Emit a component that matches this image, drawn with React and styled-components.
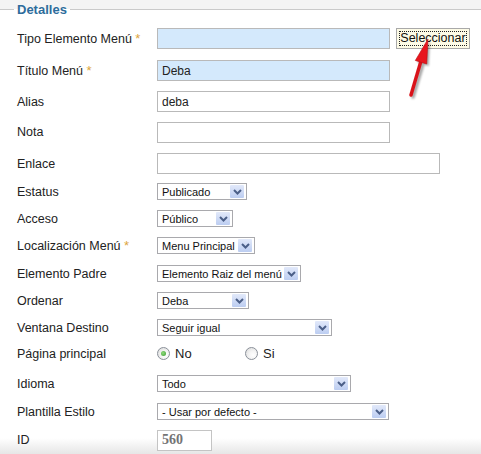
import React from "react";
import styled, { createGlobalStyle } from "styled-components";

const GlobalStyle = createGlobalStyle`
  body {
    margin: 0;
    font-family: "Liberation Sans", Arial, sans-serif;
    color: #222;
  }
`;

const Page = styled.div`
  position: relative;
  width: 481px;
  height: 454px;
  overflow: hidden;
  background: linear-gradient(
    to bottom,
    #f4f4f4 0,
    #f4f4f4 9px,
    #fff 9px,
    #fff 438px,
    #e6e6e6 454px
  );
`;

const Legend = styled.div`
  display: flex;
  align-items: center;
  height: 18px;
  margin-bottom: 4px;
  font-size: 13px;
  font-weight: bold;
  color: #2d6c9c;

  &::before,
  &::after {
    content: "";
    height: 1px;
    background: #cacaca;
  }
  &::before {
    width: 14px;
  }
  &::after {
    flex: 1;
  }

  span {
    padding: 0 3px;
  }
`;

const Row = styled.div`
  display: flex;
  align-items: center;
  height: ${({ $h }) => $h}px;
`;

const Label = styled.div`
  width: 157px;
  box-sizing: border-box;
  padding-left: 17px;
  font-size: 12.5px;
  white-space: nowrap;
`;

const Star = styled.span`
  color: #dca53c;
  font-size: 13px;
`;

const TextBox = styled.input`
  box-sizing: border-box;
  width: ${({ $w }) => $w}px;
  height: 21px;
  margin: 0;
  padding: 0 4px;
  border: 1px solid #b9b9b9;
  background: ${({ $fill }) => $fill || "#fff"};
  font-family: "Liberation Sans", Arial, sans-serif;
  font-size: 12px;
  color: #222;
  outline: none;
`;

const IdBox = styled(TextBox)`
  font-family: "Liberation Serif", "Times New Roman", serif;
  font-weight: bold;
  font-size: 14px;
  color: #747474;
  border-color: #c4c4c4;
`;

const Button = styled.button`
  box-sizing: border-box;
  width: 74px;
  height: 21px;
  margin: 0 0 0 6px;
  padding: 0;
  border: 1px solid #a9a9a9;
  background: #fdfbe6;
  font-family: "Liberation Sans", Arial, sans-serif;
  font-size: 12.5px;
  color: #111;
  position: relative;

  &::after {
    content: "";
    position: absolute;
    inset: 2px;
    border: 1px dotted #222;
  }
`;

const Select = styled.div`
  box-sizing: border-box;
  display: flex;
  align-items: center;
  width: ${({ $w }) => $w}px;
  height: 17px;
  padding: 0 2px 0 4px;
  border: 1px solid #a9a9ad;
  background: #fff;
  font-size: 11px;
  color: #111;

  span {
    flex: 1;
    white-space: nowrap;
  }
`;

const DropArrow = styled.div`
  flex: none;
  width: 14px;
  height: 13px;
  display: flex;
  align-items: center;
  justify-content: center;
  border-radius: 1px;
  background: linear-gradient(to bottom, #e2e9fa, #bccdf1);
`;

const Chevron = () => (
  <svg width="9" height="6" viewBox="0 0 9 6">
    <path d="M1 1 L4.5 4.5 L8 1" fill="none" stroke="#4b5f88" strokeWidth="2" />
  </svg>
);

const Dropdown = ({ w, children }) => (
  <Select $w={w}>
    <span>{children}</span>
    <DropArrow>
      <Chevron />
    </DropArrow>
  </Select>
);

const RadioGroup = styled.div`
  display: flex;
  align-items: center;
`;

const RadioItem = styled.label`
  display: flex;
  align-items: center;
  width: 88px;
  font-size: 13px;
  color: #222;
`;

const RadioDot = styled.span`
  box-sizing: border-box;
  width: 13px;
  height: 13px;
  margin-right: 5px;
  border-radius: 50%;
  border: 1px solid #8a9099;
  background: radial-gradient(circle at 65% 65%, #fff 0, #f4f4f4 40%, #d8d8d8 100%);
  display: flex;
  align-items: center;
  justify-content: center;

  &::after {
    content: "";
    width: 5px;
    height: 5px;
    border-radius: 50%;
    background: ${({ $on }) =>
      $on ? "radial-gradient(circle at 40% 40%, #8fdc7a, #3b9a35)" : "transparent"};
  }
`;

const Pointer = styled.svg`
  position: absolute;
  left: 400px;
  top: 30px;
`;

const RedArrow = () => (
  <Pointer width="45" height="75" viewBox="0 0 45 75">
    <defs>
      <filter id="sh" x="-50%" y="-50%" width="200%" height="200%">
        <feGaussianBlur stdDeviation="1.2" />
      </filter>
    </defs>
    <g transform="translate(2 2)" opacity="0.35" filter="url(#sh)">
      <line x1="21" y1="32" x2="11" y2="65" stroke="#000" strokeWidth="3.5" strokeLinecap="round" />
      <polygon points="28,9 26.7,34 15.3,30.5" fill="#000" />
    </g>
    <line x1="21" y1="31" x2="11" y2="65" stroke="#d9121a" strokeWidth="3.5" strokeLinecap="round" />
    <polygon points="28,9 26.7,34 15.3,30.5" fill="#e8161e" stroke="#b80d13" strokeWidth="0.6" />
  </Pointer>
);

const fields = [
  { label: "Título Menú", req: true, h: 33, el: <TextBox $w={233} $fill="#d4e9fc" defaultValue="Deba" /> },
  { label: "Alias", h: 29, el: <TextBox $w={233} defaultValue="deba" /> },
  { label: "Nota", h: 32, el: <TextBox $w={233} /> },
  { label: "Enlace", h: 31, el: <TextBox $w={283} /> },
  { label: "Estatus", h: 25, el: <Dropdown w={90}>Publicado</Dropdown> },
  { label: "Acceso", h: 29, el: <Dropdown w={76}>Público</Dropdown> },
  { label: "Localización Menú", req: true, h: 25, el: <Dropdown w={98}>Menu Principal</Dropdown> },
  { label: "Elemento Padre", h: 31, el: <Dropdown w={144}>Elemento Raiz del menú</Dropdown> },
  { label: "Ordenar", h: 23, el: <Dropdown w={92}>Deba</Dropdown> },
  { label: "Ventana Destino", h: 31, el: <Dropdown w={175}>Seguir igual</Dropdown> },
  {
    label: "Página principal",
    h: 21,
    el: (
      <RadioGroup>
        <RadioItem>
          <RadioDot $on />
          No
        </RadioItem>
        <RadioItem>
          <RadioDot />
          Si
        </RadioItem>
      </RadioGroup>
    ),
  },
  { label: "Idioma", h: 39, el: <Dropdown w={194}>Todo</Dropdown> },
  { label: "Plantilla Estilo", h: 17, el: <Dropdown w={232}>- Usar por defecto -</Dropdown> },
  { label: "ID", h: 40, el: <IdBox $w={55} defaultValue="560" readOnly /> },
];

const App = () => {
  return (
    <Page>
      <GlobalStyle />
      <Legend>
        <span>Detalles</span>
      </Legend>

      <Row $h={32}>
        <Label>
          Tipo Elemento Menú <Star>*</Star>
        </Label>
        <TextBox $w={233} $fill="#d4e9fc" />
        <Button>Seleccionar</Button>
      </Row>

      {fields.map((f) => (
        <Row key={f.label} $h={f.h}>
          <Label>
            {f.label}
            {f.req && (
              <>
                {" "}
                <Star>*</Star>
              </>
            )}
          </Label>
          {f.el}
        </Row>
      ))}

      <RedArrow />
    </Page>
  );
};

export default App;
